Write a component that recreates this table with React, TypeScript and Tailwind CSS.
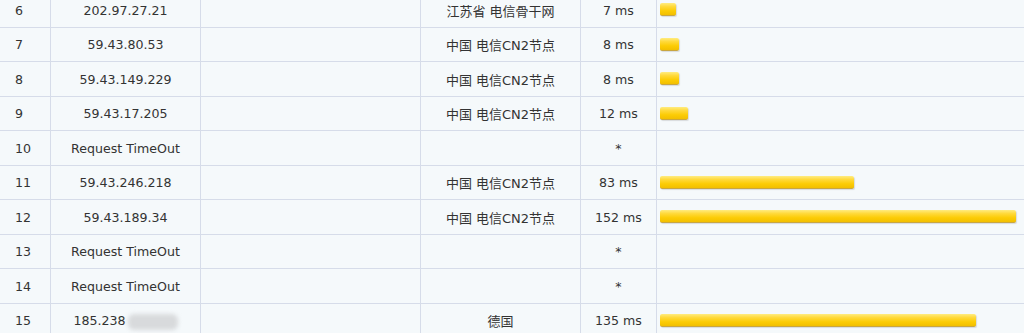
const rows = [
  { hop: 6, ip: "202.97.27.21", loc: "江苏省 电信骨干网", ms: 7 },
  { hop: 7, ip: "59.43.80.53", loc: "中国 电信CN2节点", ms: 8 },
  { hop: 8, ip: "59.43.149.229", loc: "中国 电信CN2节点", ms: 8 },
  { hop: 9, ip: "59.43.17.205", loc: "中国 电信CN2节点", ms: 12 },
  { hop: 10, ip: "Request TimeOut", loc: "", ms: null },
  { hop: 11, ip: "59.43.246.218", loc: "中国 电信CN2节点", ms: 83 },
  { hop: 12, ip: "59.43.189.34", loc: "中国 电信CN2节点", ms: 152 },
  { hop: 13, ip: "Request TimeOut", loc: "", ms: null },
  { hop: 14, ip: "Request TimeOut", loc: "", ms: null },
  { hop: 15, ip: "185.238", loc: "德国", ms: 135, masked: true },
];

const cell =
  "flex items-center border-r border-[#d6dce9] pt-[3px] whitespace-nowrap";

export default function App() {
  return (
    <div
      className="w-[1024px] h-[333px] overflow-hidden bg-[#f5f9fb] text-[#333] text-[12.6px]"
      style={{ fontFamily: '"DejaVu Sans", "Noto Sans CJK SC", sans-serif' }}
    >
      <div className="-mt-[7px]">
        {rows.map((r) => (
          <div
            key={r.hop}
            className="grid grid-cols-[51px_150px_220px_160px_76px_1fr] h-[34.5px] border-b border-[#d6dce9]"
          >
            <div className={`${cell} pl-[15px]`}>{r.hop}</div>
            <div className={`${cell} justify-center`}>
              {r.ip}
              {r.masked && (
                <span className="inline-block w-[50px] h-[16px] ml-[2px] rounded-[6px] bg-[#d8dadc] blur-[2px]" />
              )}
            </div>
            <div className={cell} />
            <div className={`${cell} justify-center text-[13px]`}>{r.loc}</div>
            <div className={`${cell} justify-center`}>
              {r.ms === null ? "*" : `${r.ms} ms`}
            </div>
            <div className="flex items-center pl-[3px]">
              {r.ms !== null && (
                <div
                  className="h-[13px] rounded-[2px] border-b border-[#c9a640] shadow-[1px_1px_1px_rgba(0,0,0,0.12)] bg-[linear-gradient(to_bottom,#ffec80_0%,#ffd93a_30%,#fccc05_65%,#f2bf00_100%)]"
                  style={{ width: Math.round(r.ms * 2.34) }}
                />
              )}
            </div>
          </div>
        ))}
      </div>
    </div>
  );
}
